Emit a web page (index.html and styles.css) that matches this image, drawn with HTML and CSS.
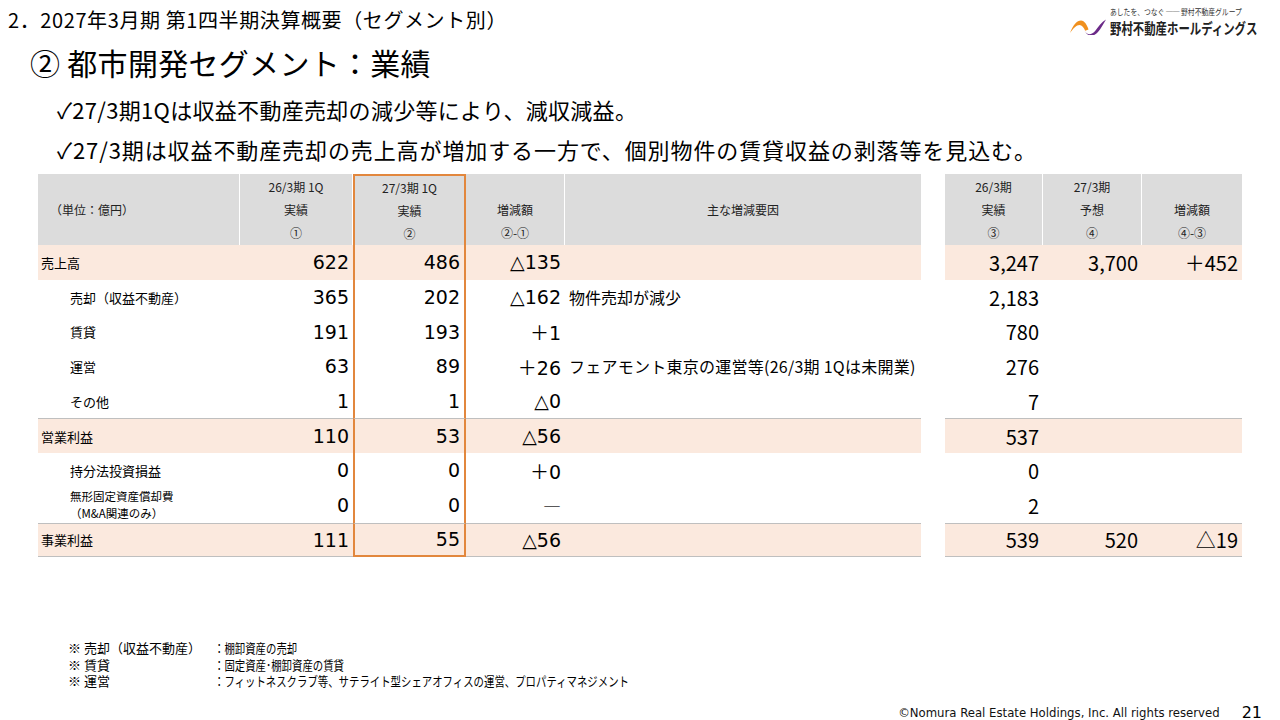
FILE: index.html
```html
<!DOCTYPE html>
<html lang="ja">
<head>
<meta charset="utf-8">
<title>都市開発セグメント：業績</title>
<link rel="stylesheet" href="styles.css">
</head>
<body>
<div class="slide">
  <header class="topbar">
    <div class="section">2．2027年3月期 第1四半期決算概要（セグメント別）</div>
    <div class="logo">
      <svg class="mark" width="36" height="18" viewBox="0 0 36 18">
        <path d="M0 16 C3 8 7 3.5 11 3.5 C14.5 3.5 17 8 18.5 12.5 L15.2 13.8 C13.8 10.5 12 8 9.5 8 C6.5 8 3.5 11 0 16Z" fill="#f0901e"/>
        <path d="M14.5 13.5 C17 18.5 21.5 18.5 25.5 13.5 C28.5 9.5 31.5 5 36 2.5 C33.5 6.5 31 11.5 28 15 C23.5 20.5 17 19.5 14.5 13.5Z" fill="#6b2a88"/>
      </svg>
      <div class="logo-text">
        <div class="tagline">あしたを、つなぐ ── 野村不動産グループ</div>
        <div class="brand">野村不動産ホールディングス</div>
      </div>
    </div>
  </header>

  <h1 class="title">② 都市開発セグメント：業績</h1>

  <ul class="bullets">
    <li>✓27/3期1Qは収益不動産売却の減少等により、減収減益。</li>
    <li>✓27/3期は収益不動産売却の売上高が増加する一方で、個別物件の賃貸収益の剥落等を見込む。</li>
  </ul>

  <div class="table">
    <div class="row head">
      <div class="c lbl-h">（単位：億円）</div>
      <div class="c"><span>26/3期 1Q</span><span>実績</span><span>①</span></div>
      <div class="c hl"><span>27/3期 1Q</span><span>実績</span><span>②</span></div>
      <div class="c"><span>&nbsp;</span><span>増減額</span><span>②-①</span></div>
      <div class="c last"><span>主な増減要因</span></div>
      <div class="gap"></div>
      <div class="c"><span>26/3期</span><span>実績</span><span>③</span></div>
      <div class="c"><span>27/3期</span><span>予想</span><span>④</span></div>
      <div class="c last"><span>&nbsp;</span><span>増減額</span><span>④-③</span></div>
    </div>

    <div class="row tint">
      <div class="c lbl">売上高</div>
      <div class="c num">622</div>
      <div class="c num hl">486</div>
      <div class="c num">△135</div>
      <div class="c reason"></div>
      <div class="gap"></div>
      <div class="c rnum">3,247</div>
      <div class="c rnum">3,700</div>
      <div class="c rnum">＋452</div>
    </div>

    <div class="row">
      <div class="c lbl sub">売却（収益不動産）</div>
      <div class="c num">365</div>
      <div class="c num hl">202</div>
      <div class="c num">△162</div>
      <div class="c reason">物件売却が減少</div>
      <div class="gap"></div>
      <div class="c rnum">2,183</div>
      <div class="c rnum"></div>
      <div class="c rnum"></div>
    </div>

    <div class="row">
      <div class="c lbl sub">賃貸</div>
      <div class="c num">191</div>
      <div class="c num hl">193</div>
      <div class="c num">＋1</div>
      <div class="c reason"></div>
      <div class="gap"></div>
      <div class="c rnum">780</div>
      <div class="c rnum"></div>
      <div class="c rnum"></div>
    </div>

    <div class="row">
      <div class="c lbl sub">運営</div>
      <div class="c num">63</div>
      <div class="c num hl">89</div>
      <div class="c num">＋26</div>
      <div class="c reason wide">フェアモント東京の運営等(26/3期 1Qは未開業)</div>
      <div class="gap"></div>
      <div class="c rnum">276</div>
      <div class="c rnum"></div>
      <div class="c rnum"></div>
    </div>

    <div class="row">
      <div class="c lbl sub">その他</div>
      <div class="c num">1</div>
      <div class="c num hl">1</div>
      <div class="c num">△0</div>
      <div class="c reason"></div>
      <div class="gap"></div>
      <div class="c rnum">7</div>
      <div class="c rnum"></div>
      <div class="c rnum"></div>
    </div>

    <div class="row tint ruled">
      <div class="c lbl">営業利益</div>
      <div class="c num">110</div>
      <div class="c num hl">53</div>
      <div class="c num">△56</div>
      <div class="c reason"></div>
      <div class="gap"></div>
      <div class="c rnum">537</div>
      <div class="c rnum"></div>
      <div class="c rnum"></div>
    </div>

    <div class="row">
      <div class="c lbl sub">持分法投資損益</div>
      <div class="c num">0</div>
      <div class="c num hl">0</div>
      <div class="c num">＋0</div>
      <div class="c reason"></div>
      <div class="gap"></div>
      <div class="c rnum">0</div>
      <div class="c rnum"></div>
      <div class="c rnum"></div>
    </div>

    <div class="row">
      <div class="c lbl sub two"><span>無形固定資産償却費</span><span>（M&amp;A関連のみ）</span></div>
      <div class="c num">0</div>
      <div class="c num hl">0</div>
      <div class="c num dash">―</div>
      <div class="c reason"></div>
      <div class="gap"></div>
      <div class="c rnum">2</div>
      <div class="c rnum"></div>
      <div class="c rnum"></div>
    </div>

    <div class="row tint ruled closing">
      <div class="c lbl">事業利益</div>
      <div class="c num">111</div>
      <div class="c num hl">55</div>
      <div class="c num">△56</div>
      <div class="c reason"></div>
      <div class="gap"></div>
      <div class="c rnum">539</div>
      <div class="c rnum">520</div>
      <div class="c rnum">△19</div>
    </div>
  </div>

  <div class="notes">
    <div class="nk">※ 売却（収益不動産）</div><div class="nv"><span>：棚卸資産の売却</span></div>
    <div class="nk">※ 賃貸</div><div class="nv"><span>：固定資産･棚卸資産の賃貸</span></div>
    <div class="nk">※ 運営</div><div class="nv"><span>：フィットネスクラブ等、サテライト型シェアオフィスの運営、プロパティマネジメント</span></div>
  </div>

  <footer class="footer">
    <span class="copy">©Nomura Real Estate Holdings, Inc. All rights reserved</span>
    <span class="page">21</span>
  </footer>
</div>
</body>
</html>
```

FILE: styles.css
```css
* { box-sizing: border-box; }
html, body { margin: 0; padding: 0; background: #fff; }
body {
  font-family: "Noto Sans CJK JP", "Noto Sans", sans-serif;
  color: #000;
}
.slide {
  width: 1280px;
  height: 720px;
  overflow: hidden;
  display: flex;
  flex-direction: column;
}

/* top bar */
.topbar {
  height: 40px;
  display: flex;
  justify-content: space-between;
  align-items: flex-start;
  padding: 0 22px 0 8px;
}
.section {
  margin-top: 8px;
  font-size: 20px;
  line-height: 24px;
  letter-spacing: 0.6px;
  white-space: nowrap;
}
.logo {
  margin-top: 5px;
  display: flex;
  align-items: flex-end;
  gap: 4px;
}
.mark { display: block; margin-bottom: 2px; }
.logo-text { width: 148px; white-space: nowrap; }
.tagline {
  font-size: 8.5px;
  line-height: 12px;
  color: #333;
  transform: scaleX(0.8);
  transform-origin: left center;
}
.brand {
  margin-top: 2px;
  font-size: 15px;
  line-height: 18px;
  font-weight: 700;
  color: #222;
  transform: scaleX(0.76);
  transform-origin: left center;
}

/* title */
.title {
  margin: 2px 0 0 30px;
  font-size: 30px;
  line-height: 40px;
  font-weight: 400;
  letter-spacing: 0.3px;
  white-space: nowrap;
}

/* bullets */
.bullets {
  list-style: none;
  margin: 7px 0 5px 57px;
  padding: 0;
}
.bullets li {
  font-size: 22px;
  line-height: 40px;
  white-space: nowrap;
  letter-spacing: 0.3px;
}
.bullets li + li { letter-spacing: 0.9px; }

/* table */
.table {
  margin-left: 38px;
  width: 1204px;
}
.row {
  display: grid;
  grid-template-columns: 202px 113px 113px 99px 356px 24px 98px 99px 100px;
  height: 34.7px;
}
.c {
  display: flex;
  align-items: center;
}
.row.head { height: 71px; }
.row.head .c {
  background: #dcdcdc;
  border-right: 1px solid #fff;
  border-bottom: 2px solid #bfbfbf;
  flex-direction: column;
  justify-content: center;
  font-size: 12px;
  line-height: 23px;
  color: #222;
  text-align: center;
}
.row.head .c.last { border-right: none; }
.row.head .c.lbl-h {
  align-items: flex-start;
  padding-left: 12px;
}
.row.tint .c { background: #fbe9de; }
.row.ruled .c { border-top: 1px solid #bfbfbf; }
.row.closing .c { border-bottom: 1px solid #bfbfbf; }

.lbl {
  padding-left: 3px;
  font-size: 13px;
  white-space: nowrap;
}
.lbl.sub { padding-left: 32px; }
.lbl.two {
  flex-direction: column;
  align-items: flex-start;
  justify-content: center;
  font-size: 11.5px;
  line-height: 17px;
}
.lbl.two span { display: block; }

.num {
  justify-content: flex-end;
  padding-right: 4px;
  font-family: "DejaVu Sans", "Noto Sans CJK JP", sans-serif;
  font-size: 19px;
}
.num.dash {
  font-family: "Noto Sans CJK JP", sans-serif;
  font-size: 18px;
  color: #333;
}
.reason {
  padding-left: 4px;
  font-size: 16px;
  white-space: nowrap;
}
.reason.wide { letter-spacing: 0.25px; }
.rnum {
  justify-content: flex-end;
  padding-right: 4px;
  font-size: 20px;
}

/* orange highlight of the current quarter column */
.hl {
  border-left: 2px solid #e2873d;
  border-right: 2px solid #e2873d;
}
.row.head .c.hl { border-top: 2px solid #e2873d; border-right: 2px solid #e2873d; }
.row.closing .c.hl { border-bottom: 2px solid #e2873d; }

/* notes */
.notes {
  margin: 83px 0 0 68px;
  display: grid;
  grid-template-columns: 146px auto;
  font-size: 13px;
  line-height: 16.5px;
  white-space: nowrap;
}
.nv span {
  display: inline-block;
  transform: scaleX(0.8);
  transform-origin: left center;
}

/* footer */
.footer {
  margin-top: auto;
  height: 16px;
  display: flex;
  justify-content: flex-end;
  align-items: center;
  gap: 22px;
  padding-right: 18px;
}
.copy {
  font-family: "DejaVu Sans Condensed", "DejaVu Sans", sans-serif;
  font-size: 13px;
  color: #111;
}
.page {
  font-family: "DejaVu Sans", sans-serif;
  font-size: 16px;
}
```
